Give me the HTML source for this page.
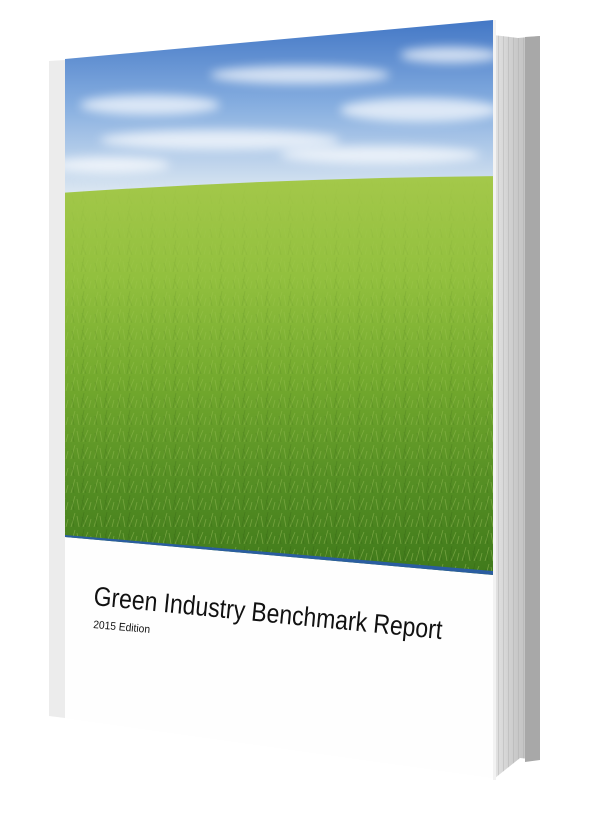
<!DOCTYPE html>
<html><head><style>
html,body{margin:0;padding:0;background:#fff;width:600px;height:827px;overflow:hidden}
</style></head><body>
<svg width="600" height="827" viewBox="0 0 600 827" xmlns="http://www.w3.org/2000/svg">
<defs>
<linearGradient id="sky" x1="0" y1="0" x2="0" y2="1">
<stop offset="0" stop-color="#3f74c4"/><stop offset="0.5" stop-color="#86aee0"/><stop offset="1" stop-color="#dde8f2"/>
</linearGradient>
<linearGradient id="grass" x1="0" y1="0" x2="0" y2="1">
<stop offset="0" stop-color="#a4c84a"/><stop offset="0.25" stop-color="#92c03e"/><stop offset="0.5" stop-color="#74aa2e"/><stop offset="0.75" stop-color="#568f24"/><stop offset="1" stop-color="#3e781a"/>
</linearGradient>
<linearGradient id="pages" x1="0" y1="0" x2="1" y2="0">
<stop offset="0" stop-color="#e4e4e4"/><stop offset="0.5" stop-color="#c9c9c9"/><stop offset="1" stop-color="#bdbdbd"/>
</linearGradient>
<linearGradient id="fade" x1="0" y1="0" x2="0" y2="1">
<stop offset="0" stop-color="#000"/><stop offset="0.35" stop-color="#666"/><stop offset="1" stop-color="#fff"/>
</linearGradient>
<mask id="fm" maskUnits="userSpaceOnUse" x="60" y="180" width="440" height="400">
<rect x="60" y="180" width="440" height="400" fill="url(#fade)"/>
</mask>
<pattern id="lines" width="5" height="10" patternUnits="userSpaceOnUse">
<rect x="3" width="1" height="10" fill="#aaa" opacity="0.4"/>
</pattern>
<pattern id="blades" width="23" height="17" patternUnits="userSpaceOnUse">
<path d="M2,17 L6,3 M10,17 L8,6 M14,17 L19,5 M20,17 L22,9" stroke="#d4ea8a" stroke-width="0.8" opacity="0.35"/>
<path d="M5,17 L3,8 M12,17 L15,2 M17,17 L13,7" stroke="#2c5a10" stroke-width="0.9" opacity="0.3"/>
</pattern>
<clipPath id="img"><polygon points="65,59 493,20 493,575 65,537"/></clipPath>
<filter id="blur"><feGaussianBlur stdDeviation="5"/></filter>
</defs>
<polygon points="49,61 65,60 65,718 49,716" fill="#ececec"/>
<polygon points="493,35 518,38 540,36 540,760 520,758 495,778" fill="url(#pages)"/>
<polygon points="493,35 518,38 540,36 540,760 520,758 495,778" fill="url(#lines)"/>
<polygon points="525,37 540,36 540,760 525,762" fill="#a8a8a8"/>
<polygon points="65,59 493,20 493,778 65,718" fill="#fefefe"/>
<rect x="493" y="20" width="3" height="760" fill="#f2f2f2"/>
<g clip-path="url(#img)">
<rect x="60" y="15" width="440" height="180" fill="url(#sky)"/>
<g filter="url(#blur)" fill="#fff" opacity="0.7">
<ellipse cx="150" cy="105" rx="70" ry="10"/><ellipse cx="300" cy="75" rx="90" ry="9"/>
<ellipse cx="420" cy="110" rx="80" ry="12"/><ellipse cx="220" cy="140" rx="120" ry="10"/>
<ellipse cx="380" cy="155" rx="100" ry="9"/><ellipse cx="110" cy="165" rx="60" ry="8"/>
<ellipse cx="450" cy="55" rx="50" ry="8"/>
</g>
<path d="M60,193 Q280,178 500,176 L500,580 L60,580 Z" fill="url(#grass)"/>
<rect x="60" y="180" width="440" height="400" fill="url(#blades)" mask="url(#fm)"/>
<polygon points="65,535 493,571 493,575 65,539" fill="#2a5da0"/>
</g>
<g transform="translate(93,605) rotate(5.6)">
<text font-family="'Liberation Sans',sans-serif" font-size="27" fill="#111" textLength="350" lengthAdjust="spacingAndGlyphs">Green Industry Benchmark Report</text>
</g>
<g transform="translate(93,628) rotate(5)">
<text font-family="'Liberation Sans',sans-serif" font-size="11" fill="#111" textLength="57" lengthAdjust="spacingAndGlyphs">2015 Edition</text>
</g>
</svg>
</body></html>
